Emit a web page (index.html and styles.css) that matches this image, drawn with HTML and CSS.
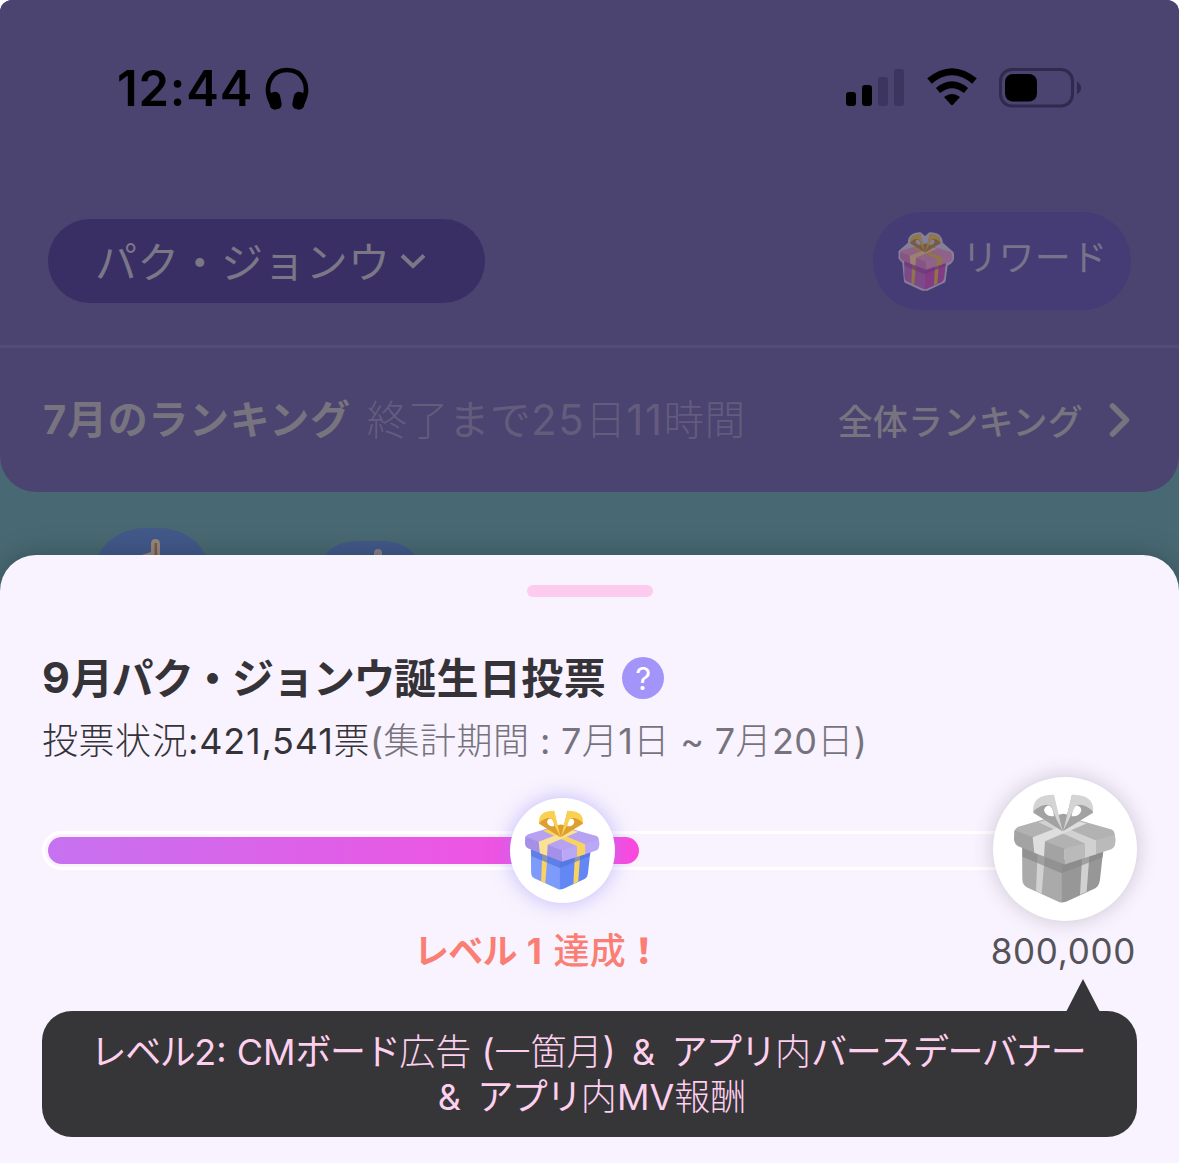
FILE: index.html
```html
<!DOCTYPE html>
<html lang="ja">
<head>
<meta charset="utf-8">
<title>誕生日投票</title>
<link rel="stylesheet" href="styles.css">
</head>
<body>
<svg class="defs" aria-hidden="true">
  <symbol id="gift" viewBox="120 93 327 344">
    <path class="g-outline" d="M188 160Q183 105 250 104L278 130L306 104Q370 104 372 160L435 215Q444 255 425 268L400 285L388 378L290 426H262L165 380L155 268L133 245V208Z"/>
    <path class="g-left" d="M156 250L275 300V427Q268 427 262 423L170 381Q157 374 157 356Z"/>
    <path class="g-right" d="M274 300L400 268L390 358Q388 377 376 384L290 424Q282 427 274 427Z"/>
    <path class="g-band" d="M203 270L225 280L215 401L198 393ZM336 295L358 288L350 394L330 404Z"/>
    <path class="g-shade" d="M157 262L275 306L400 274L398 291L275 339L158 290Z"/>
    <path class="g-top" d="M134 212Q135 204 145 200L220 178Q280 160 320 178L425 208Q434 212 435 228L284 268Z"/>
    <path class="g-lidl" d="M133 210L284 266V313L146 259Q132 252 132 236Z"/>
    <path class="g-lidr" d="M284 266L434 224Q438 235 436 248Q435 262 424 267L284 313Z"/>
    <path class="g-band" d="M205 186L229 179L378 241V282L345 293V250Z"/>
    <path class="g-pale" d="M188 231L318 181L350 190L225 243L222 289L193 278Z"/>
    <path class="g-knot" d="M258 170Q278 152 302 168L278 212Z"/>
    <path class="g-bowd" fill-rule="evenodd" d="M277 213L190 158Q188 122 250 104ZM222 150Q225 136 239 136Q250 144 252 168Q228 170 222 150Z"/>
    <path class="g-bowd" fill-rule="evenodd" d="M279 213L369 158Q370 122 306 104ZM334 150Q332 136 318 136Q307 144 305 168Q329 170 334 150Z"/>
    <path class="g-bow" d="M190 154Q185 104 252 104L277 211Q257 177 243 137Q219 126 190 154ZM369 154Q374 104 306 104L280 211Q299 177 316 137Q340 126 369 154Z"/>
  </symbol>
</svg>
<div class="screen">
  <header class="panel">
    <div class="status">
      <div class="clock">12:44
        <svg class="phones" width="44" height="44" viewBox="0 0 44 44"><path d="M6.500 36C-2 19 6 3 22 3S46 19 37.500 36" fill="none" stroke="#000" stroke-width="4.600"/><rect x="4" y="25" width="12" height="17.500" rx="5" transform="rotate(-12 10 34)"/><rect x="28" y="25" width="12" height="17.500" rx="5" transform="rotate(12 34 34)"/></svg>
      </div>
      <svg class="signal" width="58" height="37" viewBox="0 0 58 37"><rect y="23" width="10" height="14" rx="3"/><rect x="16" y="16" width="10" height="21" rx="3"/><g fill="#3c355f"><rect x="32" y="8" width="10" height="29" rx="3"/><rect x="48" width="10" height="37" rx="3"/></g></svg>
      <svg class="wifi" width="50" height="38" viewBox="0 0 50 38"><path d="M2.500 13Q25-5.500 47.500 13" fill="none" stroke="#000" stroke-width="7"/><path d="M11 22.500Q25 11 39 22.500" fill="none" stroke="#000" stroke-width="6.600"/><path d="M17 29Q25 23 33 29L26.200 36.600Q25 37.800 23.800 36.600Z"/></svg>
      <svg class="battery" width="83" height="40" viewBox="0 0 83 40"><rect x="1.500" y="1.500" width="72" height="36.500" rx="11.500" fill="none" stroke="#302a4e" stroke-width="3"/><rect x="6" y="6" width="32" height="27.500" rx="8"/><path d="M78 13.500Q82 16 82 20T78 26Z" fill="#302a4e"/></svg>
    </div>
    <div class="tools">
      <button class="picker">パク・ジョンウ<svg width="26" height="18" viewBox="0 0 26 18"><path d="M2 3.500L13 14L24 3.500" fill="none" stroke="#7b7786" stroke-width="4"/></svg></button>
      <button class="reward"><svg class="gift gift-pink" width="56" height="59"><use href="#gift"/></svg><span>リワード</span></button>
    </div>
    <div class="ranking">
      <b class="month"><span class="lat">7</span>月のランキング</b>
      <span class="left">終了<span class="reg">まで</span><span class="lat">25</span>日<span class="lat">11</span>時間</span>
      <span class="all">全体ランキング</span>
      <svg class="go" width="24" height="36" viewBox="0 0 24 36"><path d="M4.500 4L18.500 18L4.500 32" fill="none" stroke="#77747f" stroke-width="5.500" stroke-linecap="round" stroke-linejoin="round"/></svg>
    </div>
  </header>
  <div class="bubble first"><svg width="40" height="28" viewBox="0 0 40 28"><path d="M1 28Q4 17 14 16L20 14V6Q20 1 24.500 1T29 6V28Z" fill="#96877c"/><path d="M5 28Q9 18 17 19L20 28Z" fill="#743f45"/><path d="M23.500 5H26V28H23.500Z" fill="#795a50"/></svg></div>
  <div class="bubble second"><svg width="14" height="16" viewBox="0 0 14 16"><path d="M3 16V5Q3 1 7 1T11 5V16Z" fill="#868188"/></svg></div>

  <main class="sheet">
    <div class="grip"></div>
    <h1><span class="lat">9</span>月パク・ジョンウ<span class="kanji">誕生日投票</span><i class="help">?</i></h1>
    <p class="tally">投票状況<span class="lat count">:421,541</span>票<span class="period"><span class="lat">(</span>集計期間<span class="lat"> : 7</span>月<span class="lat">1</span>日<span class="lat"> ~ 7</span>月<span class="lat">20</span>日<span class="lat">)</span></span></p>
    <div class="progress">
      <div class="track"><div class="fill"></div></div>
      <div class="badge level1"><svg class="gift gift-blue" width="80" height="84"><use href="#gift"/></svg></div>
      <div class="badge level2"><svg class="gift gift-gray" width="109" height="115"><use href="#gift"/></svg></div>
    </div>
    <div class="labels">
      <strong class="done"><span class="kana">レベル</span><span class="lat"> 1 </span><span class="mid">達成</span><span class="bang">！</span></strong>
      <span class="goal">800,000</span>
    </div>
    <div class="tip">
      <div class="line"><span class="kana">レベル</span><span class="lat">2: CM</span><span class="kana">ボード</span>広告<span class="lat"> (</span>一箇月<span class="lat amp">)&nbsp; &amp;&nbsp; </span><span class="kana">アプリ</span>内<span class="kana">バースデーバナー</span></div>
      <div class="line last"><span class="lat amp">&amp;&nbsp; </span><span class="kana">アプリ</span>内<span class="lat">MV</span>報酬</div>
    </div>
  </main>
</div>
</body>
</html>
```
FILE: styles.css
```css
* { box-sizing: border-box; }
body {
  margin: 0;
  background: #fff;
  font-family: Inter, "Noto Sans CJK JP", sans-serif;
}
.defs { position: absolute; width: 0; height: 0; }
.screen {
  position: relative;
  width: 1179px;
  height: 1163px;
  overflow: hidden;
  border-radius: 12px 12px 0 0;
  background: #486973;
}

.panel {
  height: 492px;
  background: #4b4370;
  border-radius: 0 0 36px 36px;
}
.status {
  display: flex;
  align-items: flex-start;
  height: 212px;
  padding: 67px 97px 0 117px;
}
.clock {
  display: flex;
  gap: 12px;
  margin-right: auto;
  font-size: 49px;
  font-weight: 600;
  line-height: 43px;
  letter-spacing: .8px;
  color: #000;
}
.signal { margin: 2px 23px 0 0; }
.wifi { margin: 1px 22px 0 0; }
.battery { margin-top: 1px; }

.tools {
  display: flex;
  align-items: center;
  justify-content: space-between;
  height: 98px;
  padding: 0 48px;
}
button { border: 0; font: inherit; color: #7b7786; }
.picker {
  display: flex;
  align-items: center;
  gap: 11px;
  width: 437px;
  height: 84px;
  padding: 0 0 4px 47px;
  border-radius: 42px;
  background: #392f65;
  font-family: "Noto Sans CJK JP", sans-serif;
  font-size: 42px;
  font-weight: 400;
  letter-spacing: .3px;
}
.picker svg { margin: 4px 0 0 -1px; }
.reward {
  display: flex;
  align-items: center;
  gap: 8px;
  width: 258px;
  height: 98px;
  padding: 0 0 0 25px;
  border-radius: 49px;
  background: #453c75;
  font-family: "Noto Sans CJK JP", sans-serif;
  font-size: 36px;
  letter-spacing: .4px;
  color: #77738a;
}
.reward span { margin-top: -13px; }
.ranking {
  display: flex;
  align-items: center;
  height: 147px;
  margin-top: 35px;
  padding: 0 47px 0 43px;
  border-top: 3px solid #544c78;
  color: #77747f;
  font-family: "Noto Sans CJK JP", sans-serif;
}
.month { margin-top: -6px; font-size: 40px; letter-spacing: .7px; }
.left {
  margin: -5px 0 0 16px;
  font-size: 40.700px;
  font-weight: 300;
  color: #635c7d;
}
.left .lat { font-size: 42px; font-weight: 400; letter-spacing: 1.500px; }
.left { letter-spacing: .4px; }
.reg { font-weight: 400; }
.all {
  margin: -2px 0 0 auto;
  font-size: 35px;
  font-weight: 500;
  letter-spacing: .2px;
}
.go { margin-left: 25px; }

.bubble {
  position: absolute;
  background: #42598a;
}
.first { left: 96px; top: 528px; width: 112px; height: 112px; padding: 10px 0 0 35px; border-radius: 50px / 40px; }
.second { left: 322px; top: 541px; width: 96px; height: 96px; padding: 7px 0 0 49px; border-radius: 36px / 24px; }

.sheet {
  position: absolute;
  inset: 555px 0 0;
  padding: 30px 42px 0;
  border-radius: 36px 36px 0 0;
  background: #f8f3fe;
  box-shadow: 0 0 28px rgba(0, 0, 0, .25);
  font-family: "Noto Sans CJK JP", sans-serif;
}
.lat { font-family: Inter, sans-serif; white-space: pre; }
.grip {
  width: 126px;
  height: 12px;
  margin: 0 auto;
  border-radius: 6px;
  background: #fdcbed;
}
h1 {
  display: flex;
  align-items: center;
  height: 60px;
  margin: 48px 0 0;
  font-size: 42px;
  font-weight: 700;
  letter-spacing: -1.500px;
  color: #353338;
}
h1 .lat { margin-top: 3px; font-size: 43px; letter-spacing: 1px; }
h1 .kanji { letter-spacing: .4px; }
.help {
  width: 42px;
  height: 42px;
  margin: 6px 0 0 16px;
  border-radius: 50%;
  background: #a294f8;
  color: #fff;
  font: 400 31px/43px Inter, sans-serif;
  letter-spacing: 0;
  text-align: center;
}
.tally {
  height: 50px;
  margin: 8px 0 0;
  font-size: 36px;
  font-weight: 300;
  line-height: 50px;
  letter-spacing: .5px;
  color: #353338;
}
.tally .lat { font-weight: 400; letter-spacing: .3px; }
.tally .count { letter-spacing: .8px; }
.period { color: #77737d; }

.progress {
  position: relative;
  height: 144px;
  margin-top: 14px;
}
.track {
  position: absolute;
  left: 0;
  top: 54px;
  width: 1020px;
  height: 39px;
  padding: 3px;
  border: 3px solid #fff;
  border-radius: 20px;
}
.fill {
  width: 591px;
  height: 27px;
  border-radius: 14px;
  background: linear-gradient(90deg, #c672f0, #fb4ade);
}
.badge {
  position: absolute;
  display: flex;
  align-items: center;
  justify-content: center;
  border-radius: 50%;
  background: #fff;
}
.badge .gift { margin: -1px 2px 0 0; }
.level1 { left: 468px; top: 21px; width: 105px; height: 105px; box-shadow: 0 0 20px rgba(143, 130, 250, .5); }
.level2 { right: 0; top: 0; width: 144px; height: 144px; box-shadow: 0 0 20px rgba(80, 60, 90, .25); }

.labels {
  display: flex;
  height: 60px;
  padding: 0 1px 0 372px;
  justify-content: space-between;
  align-items: center;
}
.done { margin-top: -6px; font-size: 35px; color: #fa7e74; }
.done .lat { letter-spacing: 1.600px; }
.done .kana { letter-spacing: -.02em; font-weight: 700; }
.done .mid { font-size: 36px; font-weight: 500; letter-spacing: .4px; }
.done .bang { font-weight: 900; }
.goal { font: 400 35px/60px Inter, sans-serif; color: #555259; letter-spacing: .7px; }

.tip {
  position: relative;
  height: 126px;
  margin-top: 30px;
  padding: 16px 0 0;
  border-radius: 30px;
  background: #363538;
  color: #fdd0ee;
  font-size: 36px;
  font-weight: 300;
  line-height: 45px;
  text-align: center;
}
.line { height: 45px; padding-right: 3px; white-space: nowrap; }
.line.last { padding: 0 0 0 5px; }
.tip::before {
  content: "";
  position: absolute;
  right: 37px;
  top: -32px;
  width: 34px;
  height: 33px;
  background: inherit;
  clip-path: polygon(50% 0, 100% 100%, 0 100%);
}
.tip .lat { font-weight: 400; }
.tip .kana { font-weight: 400; letter-spacing: -.04em; }
.tip .amp { word-spacing: -2px; }

.gift-blue {
  --left: #7d9bfa; --right: #6387f4; --shade: #4f70dc; --top: #b7a2f2; --lidl: #a590e8;
  --lidr: #bba7f8; --band: #f9d35f; --pale: #fbe193; --bow: #fad050; --bowd: #dda02e; --outline: none;
}
.gift-gray {
  --left: #aaa; --right: #979797; --shade: #858585; --top: #b2b2b2; --lidl: #a3a3a3;
  --lidr: #bababa; --band: #d1d1d1; --pale: #dedede; --bow: #d4d4d4; --bowd: #a2a2a2; --outline: none;
}
.gift-pink {
  --left: #7c4a89; --right: #813c83; --shade: #6c3576; --top: #8f6287; --lidl: #865584;
  --lidr: #91628b; --band: #91734c; --pale: #9a8171; --bow: #91784b; --bowd: #765c42; --outline: #85809a;
}
.g-outline { fill: var(--outline); stroke: var(--outline); stroke-width: 20; stroke-linejoin: round; }
.g-left { fill: var(--left); }
.g-right { fill: var(--right); }
.g-shade { fill: var(--shade); opacity: .65; }
.g-top { fill: var(--top); }
.g-lidl { fill: var(--lidl); }
.g-lidr { fill: var(--lidr); }
.g-band { fill: var(--band); }
.g-pale { fill: var(--pale); }
.g-knot { fill: var(--bowd); }
.g-bow { fill: var(--bow); }
.g-bowd { fill: var(--bowd); }
```
